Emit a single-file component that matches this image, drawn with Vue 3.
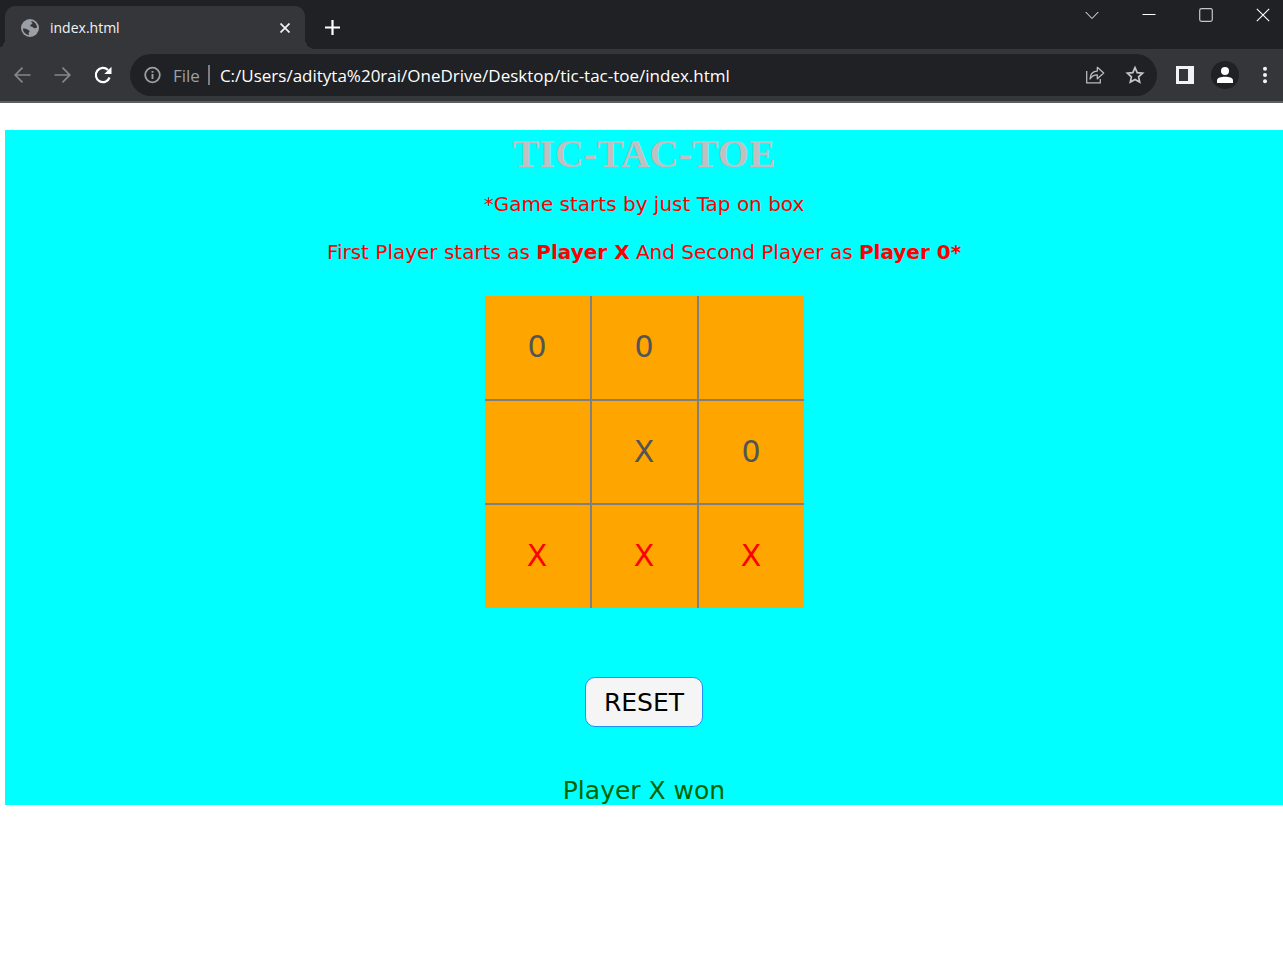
<script setup>
import { ref } from 'vue'

const address = ref('C:/Users/adityta%20rai/OneDrive/Desktop/tic-tac-toe/index.html')
const start = ['0', '0', '', '', 'X', '0', 'X', 'X', 'X']
const cells = ref([...start])
const winning = ref([6, 7, 8])
const status = ref('Player X won')

function reset() {
  cells.value = Array(9).fill('')
  winning.value = []
  status.value = ''
}
</script>

<template>
  <div class="browser">
    <header class="chrome">
      <div class="tabstrip">
        <div class="tab">
          <svg class="globe" viewBox="0 0 20 20" aria-hidden="true">
            <circle cx="10" cy="10" r="9" fill="#9aa0a6" />
            <path d="M11.500 2.900c3.200.6 5.300 3.300 5.600 6.400-.8.900-2 1.300-3.200.9-.8-1.200-1.800-1.700-3.200-1.700-.8-.8-.6-1.600.3-2 1.200-.2 1.500-.9 1.300-1.700-.9-.3-1.200-1-.8-1.900zM2.900 10.500c1.600-.2 3.100.1 4.600.9 1.200.5 2.200 1.200 2.100 2.500-.8.4-1.100 1-1.100 1.700.6.500.7 1 .3 1.500-3.500-.6-5.800-3.300-5.900-6.600z" fill="#35363a" />
          </svg>
          <span class="tab-title">index.html</span>
          <button class="icon-btn tab-close" aria-label="Close tab">
            <svg width="10" height="10" viewBox="0 0 10 10"><path d="M.5.5l9 9M9.500.5l-9 9" stroke="#f1f3f4" stroke-width="1.700" /></svg>
          </button>
        </div>
        <button class="icon-btn new-tab" aria-label="New tab">
          <svg width="16" height="16" viewBox="0 0 16 16"><path d="M7.500 0v15M0 7.500h15" stroke="#fff" stroke-width="2.200" /></svg>
        </button>
        <div class="window-controls">
          <button class="icon-btn" aria-label="Search tabs">
            <svg width="14" height="14" viewBox="0 0 14 14"><path d="M.7 4L7 10.500 13.300 4" fill="none" stroke="#fff" stroke-width="1" /></svg>
          </button>
          <button class="icon-btn" aria-label="Minimize">
            <svg width="14" height="14" viewBox="0 0 14 14"><path d="M.5 6.500h13" stroke="#fff" /></svg>
          </button>
          <button class="icon-btn" aria-label="Maximize">
            <svg width="14" height="14" viewBox="0 0 14 14"><rect x=".7" y=".7" width="12.600" height="12.600" rx="1.800" fill="none" stroke="#c5c6c7" stroke-width="1.200" /></svg>
          </button>
          <button class="icon-btn" aria-label="Close">
            <svg width="14" height="14" viewBox="0 0 14 14"><path d="M.8.8l12.400 12.400M13.200.8L.8 13.200" stroke="#fff" stroke-width="1.100" /></svg>
          </button>
        </div>
      </div>

      <div class="toolbar">
        <div class="nav">
          <button class="icon-btn" aria-label="Back">
            <svg width="18" height="18" viewBox="0 0 18 18"><path d="M16.500 9H1.500M8.500 1.700L1.200 9l7.300 7.300" fill="none" stroke="#85878a" stroke-width="1.700" /></svg>
          </button>
          <button class="icon-btn" aria-label="Forward">
            <svg width="18" height="18" viewBox="0 0 18 18"><path d="M.5 9h15M8.500 1.700L15.800 9l-7.300 7.300" fill="none" stroke="#85878a" stroke-width="1.700" /></svg>
          </button>
          <button class="icon-btn" aria-label="Reload">
            <svg width="18" height="18" viewBox="0 0 18 18"><path d="M15.600 11.500A7.100 7.100 0 1 1 14 4" fill="none" stroke="#fff" stroke-width="2.200" /><path d="M17.500.8v7.200h-7.200z" fill="#fff" /></svg>
          </button>
        </div>
        <div class="omnibox">
          <svg class="info" width="18" height="18" viewBox="0 0 18 18" aria-hidden="true">
            <circle cx="8.500" cy="9" r="7.300" fill="none" stroke="#9aa0a6" stroke-width="1.800" />
            <path d="M8.500 8v5M8.500 5v1.800" stroke="#9aa0a6" stroke-width="1.900" />
          </svg>
          <label class="scheme" for="address">File</label>
          <span class="divider"></span>
          <input id="address" v-model="address" class="address" type="text" spellcheck="false" />
          <button class="icon-btn" aria-label="Share">
            <svg width="20" height="20" viewBox="0 0 20 20" fill="none" stroke="#b9bbbe" stroke-width="1.300"><path d="M1.700 6v11.900h13.600V14" /><path d="M5 14c.3-5.500 3.200-7.800 7.300-7.900V2.300L18.700 8l-6.400 5.700v-3.800c-3.300 0-5.500 1.200-7.300 4.100z" stroke-linejoin="round" /></svg>
          </button>
          <button class="icon-btn" aria-label="Bookmark">
            <svg width="20" height="20" viewBox="0 0 20 20"><path d="M10 2.700l2.200 4.900 5.400.6-4 3.600 1.100 5.300-4.700-2.700-4.700 2.700 1.100-5.300-4-3.600 5.400-.6z" fill="none" stroke="#c4c6c9" stroke-width="1.700" /></svg>
          </button>
        </div>
        <div class="actions">
          <button class="icon-btn" aria-label="Side panel">
            <svg width="18" height="18" viewBox="0 0 18 18"><path fill-rule="evenodd" d="M0 0h18v18H0zM3 3v12h9V3z" fill="#f1f3f4" /></svg>
          </button>
          <button class="icon-btn profile" aria-label="Profile">
            <svg width="16" height="16" viewBox="0 0 16 16"><circle cx="8" cy="4" r="4" fill="#fff" /><path d="M0 16v-2.500C0 10.800 4 9.800 8 9.800s8 1 8 3.700V16z" fill="#fff" /></svg>
          </button>
          <button class="icon-btn menu" aria-label="Menu">
            <svg width="4" height="18" viewBox="0 0 4 18" fill="#f1f3f4"><circle cx="2" cy="2.700" r="2" /><circle cx="2" cy="9" r="2" /><circle cx="2" cy="15.300" r="2" /></svg>
          </button>
        </div>
      </div>
    </header>

    <main class="page">
      <section class="game">
        <h1>TIC-TAC-TOE</h1>
        <p class="rule">*Game starts by just Tap on box</p>
        <p class="rule">First Player starts as <b>Player X</b> And Second Player as <b>Player 0*</b></p>
        <div class="board">
          <input
            v-for="(cell, i) in cells"
            :key="i"
            v-model="cells[i]"
            type="text"
            readonly
            :aria-label="'Box ' + (i + 1)"
            :class="['cell', { win: winning.includes(i) }]"
          />
        </div>
        <button class="reset" @click="reset">RESET</button>
        <p class="status">{{ status }}</p>
      </section>
    </main>
  </div>
</template>

<style>
body {
  margin: 0;
  background: #fff;
}
</style>

<style scoped>
* {
  box-sizing: border-box;
}
.chrome {
  font-family: "Open Sans", "Noto Sans", sans-serif;
  background: #35363a;
  border-bottom: 2px solid #5d5e62;
}
.icon-btn {
  display: flex;
  align-items: center;
  justify-content: center;
  flex: none;
  padding: 0;
  border: 0;
  background: none;
}
.tabstrip {
  display: flex;
  align-items: flex-start;
  height: 49px;
  padding-left: 5px;
  background: #202124;
}
.tab {
  display: flex;
  align-items: center;
  width: 300px;
  height: 43px;
  margin-top: 6px;
  padding: 0 15px;
  border-radius: 10px 10px 0 0;
  background: #35363a;
  position: relative;
}
.tab::before,
.tab::after {
  content: "";
  position: absolute;
  bottom: 0;
  width: 10px;
  height: 10px;
}
.tab::before {
  left: -10px;
  background: radial-gradient(circle at 0 0, #202124 10px, #35363a 10px);
}
.tab::after {
  right: -10px;
  background: radial-gradient(circle at 100% 0, #202124 10px, #35363a 10px);
}
.globe {
  width: 20px;
  height: 20px;
}
.tab-title {
  flex: 1;
  margin-left: 10px;
  color: #f1f3f4;
  font-size: 14px;
}
.tab-close {
  width: 10px;
}
.new-tab {
  width: 16px;
  margin: 20px 0 0 20px;
}
.window-controls {
  display: flex;
  gap: 43px;
  margin: 8px 13px 0 auto;
}
.toolbar {
  display: flex;
  align-items: center;
  height: 52px;
}
.nav {
  display: flex;
  gap: 22px;
  padding: 0 18px 0 14px;
}
.omnibox {
  display: flex;
  align-items: center;
  flex: 1;
  gap: 20px;
  height: 42px;
  padding: 0 12px 0 14px;
  border-radius: 21px;
  background: #202124;
  font-size: 17px;
}
.scheme {
  margin-left: -9px;
  color: #9aa0a6;
}
.divider {
  width: 2px;
  height: 20px;
  margin: 0 -10px 0 -12px;
  background: #7c7e82;
}
.address {
  flex: 1;
  min-width: 0;
  padding: 0;
  border: 0;
  outline: 0;
  background: none;
  color: #fff;
  font: inherit;
}
.actions {
  display: flex;
  align-items: center;
  gap: 17px;
  padding: 0 16px 0 19px;
}
.profile {
  width: 28px;
  height: 28px;
  border-radius: 50%;
  background: #202124;
}
.menu {
  margin-left: 7px;
}
.page {
  padding: 27px 0 0 5px;
}
.game {
  display: flex;
  flex-direction: column;
  align-items: center;
  background: #0ff;
  font-family: Verdana, "DejaVu Sans", sans-serif;
}
h1 {
  margin: 0 0 14px;
  color: #c0c0c0;
  font: bold 40px/48px "Liberation Serif", serif;
}
.rule {
  margin: 0 0 24px;
  color: #f00;
  font-size: 20px;
  line-height: 24px;
}
.board {
  display: grid;
  grid-template-columns: repeat(3, 105px);
  grid-template-rows: 103px 102px 103px;
  gap: 2px;
  margin: 8px 0 69px;
  background: #808080;
}
.cell {
  width: 100%;
  padding: 0 0 2px;
  border: 0;
  border-radius: 0;
  outline: 0;
  background: #ffa500;
  color: #545454;
  font: inherit;
  font-size: 30px;
  text-align: center;
}
.cell.win {
  color: #f00;
}
.reset {
  height: 50px;
  padding: 0 18px;
  border: 1px solid #1e90ff;
  border-radius: 10px;
  background: #f5f5f5;
  color: #000;
  font: inherit;
  font-size: 25px;
}
.status {
  min-height: 28px;
  margin: 50px 0 0;
  color: #006400;
  font-size: 25px;
  line-height: 28px;
}
</style>
